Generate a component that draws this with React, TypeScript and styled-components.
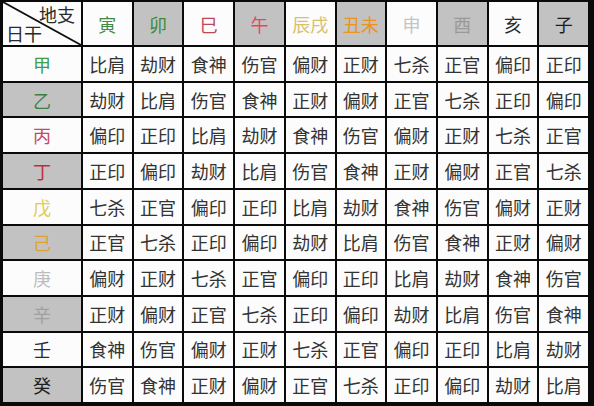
import * as React from 'react';
import styled, { createGlobalStyle } from 'styled-components';

const GlobalStyle = createGlobalStyle`
    html, body {
        margin: 0;
        padding: 0;
        background: #ffffff;
    }
`;

const Table = styled.div`
    width: 594px;
    height: 406px;
    box-sizing: border-box;
    background: #0a0a0a;
    padding: 2px 6px 4px 3px;
    display: grid;
    grid-template-columns: 78px repeat(10, 1fr);
    grid-template-rows: 43px repeat(10, 1fr);
    gap: 2px;
    font-family: "Noto Sans CJK SC", "Noto Sans", sans-serif;
`;

const Cell = styled.div<{ $shade?: boolean; $color?: string; $size?: number }>`
    display: flex;
    align-items: center;
    justify-content: center;
    background: ${ p => p.$shade ? '#c2c2c2' : '#fcfcfc' };
    color: ${ p => p.$color || '#333333' };
    font-size: ${ p => p.$size || 18 }px;
    line-height: 1;
    letter-spacing: 0;
`;

const Corner = styled.div`
    position: relative;
    background: #fcfcfc;
    color: #2a2a2a;
    font-size: 18px;
    line-height: 1;

    .top {
        position: absolute;
        right: 6px;
        top: 3px;
    }

    .bottom {
        position: absolute;
        left: 3px;
        bottom: 3px;
    }

    svg {
        position: absolute;
        inset: 0;
        width: 100%;
        height: 100%;
    }
`;

type Head = { name: string; color: string; shade: boolean };

const branches: Head[] = [
    { name: '寅', color: '#3f8a45', shade: false },
    { name: '卯', color: '#3b8a3b', shade: true },
    { name: '巳', color: '#c0475a', shade: false },
    { name: '午', color: '#e24a62', shade: true },
    { name: '辰戌', color: '#d9c070', shade: false },
    { name: '丑未', color: '#e8941e', shade: true },
    { name: '申', color: '#c4c4c4', shade: false },
    { name: '酉', color: '#9a9a9a', shade: true },
    { name: '亥', color: '#2a2a2a', shade: false },
    { name: '子', color: '#1e1e1e', shade: true },
];

const stems: Head[] = [
    { name: '甲', color: '#3f9a4a', shade: false },
    { name: '乙', color: '#3d8045', shade: true },
    { name: '丙', color: '#c8475c', shade: false },
    { name: '丁', color: '#c0303c', shade: true },
    { name: '戊', color: '#e0cc50', shade: false },
    { name: '己', color: '#e2a030', shade: true },
    { name: '庚', color: '#bdbdbd', shade: false },
    { name: '辛', color: '#a0a0a0', shade: true },
    { name: '壬', color: '#2a2a2a', shade: false },
    { name: '癸', color: '#1e1e1e', shade: true },
];

const gods = [ '比肩', '劫财', '食神', '伤官', '偏财', '正财', '七杀', '正官', '偏印', '正印' ];

// row order follows the stems; each pair of stems shifts the cycle by two
const cellFor = ( row: number, col: number ) =>
{
    const pairShift = Math.floor( row / 2 ) * 2;
    const yin = row % 2;
    const base = ( col - pairShift + 100 ) % 10;
    if ( yin === 0 ) return gods[ base ];
    return gods[ base % 2 === 0 ? base + 1 : base - 1 ];
};

const App = () =>
{
    return (
        <>
            <GlobalStyle/>
            <Table>
                <Corner>
                    <svg viewBox="0 0 78 43" preserveAspectRatio="none">
                        <line x1="0" y1="0" x2="78" y2="43" stroke="#111" strokeWidth="1.8"/>
                    </svg>
                    <span className="top">地支</span>
                    <span className="bottom">日干</span>
                </Corner>
                { branches.map( b => (
                    <Cell key={ b.name } $shade={ b.shade } $color={ b.color }>{ b.name }</Cell>
                ) ) }
                { stems.map( ( s, r ) => (
                    <React.Fragment key={ s.name }>
                        <Cell $shade={ s.shade } $color={ s.color }>{ s.name }</Cell>
                        { branches.map( ( b, c ) => (
                            <Cell key={ b.name }>{ cellFor( r, c ) }</Cell>
                        ) ) }
                    </React.Fragment>
                ) ) }
            </Table>
        </>
    );
};

export default App;
